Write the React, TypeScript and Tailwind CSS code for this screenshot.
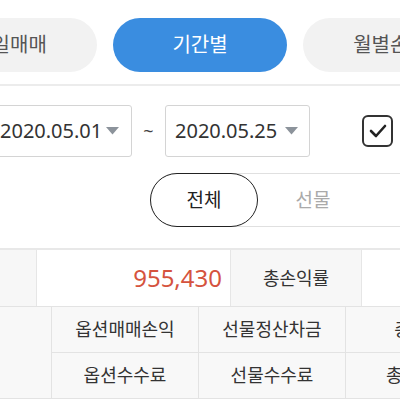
import React from "react";

const Arrow = () => (
  <svg width="13" height="8" viewBox="0 0 13 8" className="shrink-0">
    <path d="M0 0 L13 0 L6.5 7.5 Z" fill="#8c939b" />
  </svg>
);

export default function App() {
  const font = { fontFamily: '"Noto Sans", "Noto Sans CJK KR", sans-serif' };
  return (
    <div className="w-[400px] h-[400px] overflow-hidden bg-white text-[#333]" style={font}>
      {/* top tabs */}
      <div className="pt-[18px] flex gap-4 ml-[-77px] w-[600px]">
        <div className="w-[174px] h-[54px] rounded-full bg-[#f2f2f2] flex items-center justify-center text-[20px] text-[#555] shrink-0">
          당일매매
        </div>
        <div className="w-[174px] h-[54px] rounded-full bg-[#3a8de0] flex items-center justify-center text-[20px] text-white shrink-0">
          기간별
        </div>
        <div className="w-[174px] h-[54px] rounded-full bg-[#f2f2f2] flex items-center justify-center text-[20px] text-[#555] shrink-0">
          월별손익
        </div>
      </div>
      <div className="mt-[12px] h-[2px] bg-[#ececec]" />

      {/* date row */}
      <div className="mt-[19px] flex items-center ml-[-13px] w-[500px]">
        <div className="w-[145px] h-[52px] border border-[#d4d4d4] rounded-[3px] flex items-center pl-[12px] pr-[12px] justify-between shrink-0">
          <span className="text-[20px] text-[#333]">2020.05.01</span>
          <Arrow />
        </div>
        <div className="w-[33px] text-center text-[18px] text-[#444] shrink-0">~</div>
        <div className="w-[145px] h-[52px] border border-[#d4d4d4] rounded-[3px] flex items-center pl-[9px] pr-[11px] justify-between shrink-0">
          <span className="text-[20px] text-[#333]">2020.05.25</span>
          <Arrow />
        </div>
        <div className="ml-[52px] w-[31px] h-[32px] border-2 border-[#333] rounded-[6px] flex items-center justify-center shrink-0">
          <svg width="20" height="16" viewBox="0 0 20 16">
            <path d="M3 8 L8 13 L17 3" stroke="#222" strokeWidth="2.6" fill="none" strokeLinecap="round" strokeLinejoin="round" />
          </svg>
        </div>
      </div>

      {/* segment */}
      <div className="mt-[16px] ml-[150px] w-[400px] h-[54px] flex items-center border border-[#e0e0e0] rounded-l-full">
        <div className="w-[108px] h-[54px] -ml-px rounded-full border-[1.5px] border-[#222] bg-white flex items-center justify-center text-[19px] text-[#222] shrink-0">
          전체
        </div>
        <div className="w-[110px] text-center text-[19px] text-[#aaa]">선물</div>
      </div>

      {/* table */}
      <div className="mt-[21px] border-t-2 border-[#e8e8e8] w-[600px]">
        <div className="grid grid-cols-[37px_194px_131px_238px] h-[57px] border-b border-[#e3e3e3]">
          <div className="bg-[#f7f7f7] border-r border-[#e6e6e6]" />
          <div className="bg-white border-r border-[#e6e6e6] flex items-center justify-end pr-[8px] text-[24px] text-[#d5533e]">
            955,430
          </div>
          <div className="bg-[#f7f7f7] border-r border-[#e6e6e6] flex items-center justify-center text-[18px] text-[#333]">
            총손익률
          </div>
          <div className="bg-white" />
        </div>
        <div className="grid grid-cols-[52px_147px_147px_147px] bg-[#f8f8f8] border-b border-[#e3e3e3]">
          <div className="row-span-2 border-r border-[#e3e3e3]" />
          <div className="h-[46px] border-r border-b border-[#e3e3e3] flex items-center justify-center text-[18px]">옵션매매손익</div>
          <div className="h-[46px] border-r border-b border-[#e3e3e3] flex items-center justify-center text-[18px]">선물정산차금</div>
          <div className="h-[46px] border-r border-b border-[#e3e3e3] flex items-center justify-center text-[18px]">총손익</div>
          <div className="h-[45px] border-r border-[#e3e3e3] flex items-center justify-center text-[18px]">옵션수수료</div>
          <div className="h-[45px] border-r border-[#e3e3e3] flex items-center justify-center text-[18px]">선물수수료</div>
          <div className="h-[45px] border-r border-[#e3e3e3] flex items-center justify-center text-[18px]">총수수료</div>
        </div>
      </div>
    </div>
  );
}
